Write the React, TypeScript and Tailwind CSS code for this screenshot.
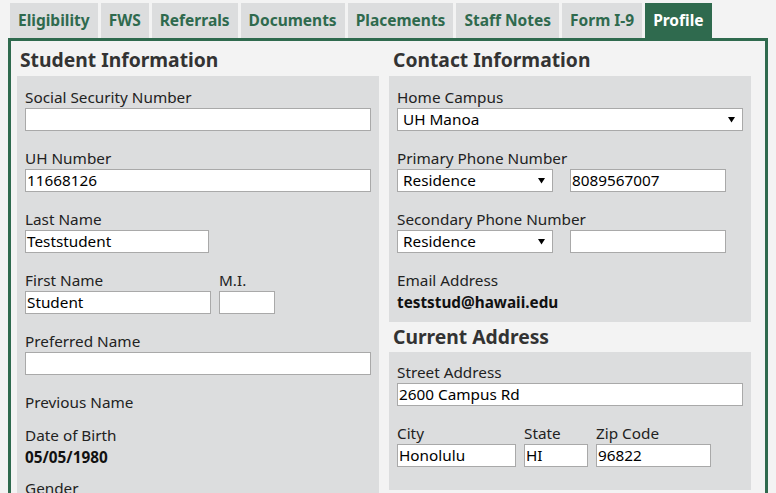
import React from "react";

const F = { fontFamily: '"Noto Sans", "Open Sans", sans-serif' };

function Arrow() {
  return (
    <svg width="7" height="7" viewBox="0 0 7 7" className="shrink-0">
      <path d="M0 1 H7 L3.5 6.5 Z" fill="#000" />
    </svg>
  );
}

function Input({ value = "", w }: { value?: string; w: string }) {
  return (
    <div
      className={`${w} h-[23px] bg-white border border-[#a9a9a9] pl-[1px] text-[15.3px] leading-[21px] text-black whitespace-nowrap overflow-hidden`}
    >
      {value}
    </div>
  );
}

function Select({ value, w }: { value: string; w: string }) {
  return (
    <div
      className={`${w} h-[23px] bg-white border border-[#a9a9a9] pl-[5px] pr-[7px] flex items-center justify-between text-[15.3px] leading-[21px] text-black`}
    >
      <span>{value}</span>
      <Arrow />
    </div>
  );
}

function Label({ children }: { children: React.ReactNode }) {
  return <div className="h-[22px] leading-[22px] text-[15.3px] text-[#222]">{children}</div>;
}

const tabs = ["Eligibility", "FWS", "Referrals", "Documents", "Placements", "Staff Notes", "Form I-9", "Profile"];

export default function App() {
  return (
    <div style={F} className="w-[776px] h-[493px] overflow-hidden bg-[#f3f3f3]">
      <div className="flex gap-[3px] pl-[10px] pt-[3px]">
        {tabs.map((t) => (
          <div
            key={t}
            className={`h-[35px] px-[8px] flex items-center font-bold text-[15.5px] ${
              t === "Profile" ? "bg-[#2f6a4e] text-white" : "bg-[#dcddde] text-[#2f6a4e]"
            }`}
          >
            {t}
          </div>
        ))}
      </div>
      <div className="ml-[8px] w-[760px] h-[460px] border-[3px] border-b-0 border-[#2f6a4e] pt-[4px] pl-[6px]">
        <div className="grid grid-cols-[362px_362px] gap-x-[10px]">
          {/* Left column */}
          <div>
            <div className="h-[30px] leading-[30px] pl-[3px] text-[19.3px] font-bold text-[#333]">Student Information</div>
            <div className="mt-[1px] bg-[#dcddde] h-[500px] pt-[10px] px-[8px]">
              <div className="mb-[16px]">
                <Label>Social Security Number</Label>
                <Input w="w-[346px]" />
              </div>
              <div className="mb-[16px]">
                <Label>UH Number</Label>
                <Input w="w-[346px]" value="11668126" />
              </div>
              <div className="mb-[16px]">
                <Label>Last Name</Label>
                <Input w="w-[184px]" value="Teststudent" />
              </div>
              <div className="mb-[16px] flex gap-[8px]">
                <div>
                  <Label>First Name</Label>
                  <Input w="w-[186px]" value="Student" />
                </div>
                <div>
                  <Label>M.I.</Label>
                  <Input w="w-[56px]" />
                </div>
              </div>
              <div className="mb-[16px]">
                <Label>Preferred Name</Label>
                <Input w="w-[346px]" />
              </div>
              <div className="mb-[11px]">
                <Label>Previous Name</Label>
              </div>
              <div className="mb-[9px]">
                <Label>Date of Birth</Label>
                <div className="h-[22px] leading-[22px] text-[15.3px] font-bold text-[#111]">05/05/1980</div>
              </div>
              <div>
                <Label>Gender</Label>
              </div>
            </div>
          </div>
          {/* Right column */}
          <div>
            <div className="h-[30px] leading-[30px] pl-[4px] text-[19.3px] font-bold text-[#333]">Contact Information</div>
            <div className="mt-[1px] bg-[#dcddde] pt-[10px] pb-[9px] px-[8px]">
              <div className="mb-[16px]">
                <Label>Home Campus</Label>
                <Select w="w-[346px]" value="UH Manoa" />
              </div>
              <div className="mb-[16px]">
                <Label>Primary Phone Number</Label>
                <div className="flex gap-[17px]">
                  <Select w="w-[156px]" value="Residence" />
                  <Input w="w-[156px]" value="8089567007" />
                </div>
              </div>
              <div className="mb-[16px]">
                <Label>Secondary Phone Number</Label>
                <div className="flex gap-[17px]">
                  <Select w="w-[156px]" value="Residence" />
                  <Input w="w-[156px]" />
                </div>
              </div>
              <div>
                <Label>Email Address</Label>
                <div className="h-[22px] leading-[22px] text-[15.3px] font-bold text-[#111]">teststud@hawaii.edu</div>
              </div>
            </div>
            <div className="h-[30px] leading-[30px] pl-[4px] text-[19.3px] font-bold text-[#333]">Current Address</div>
            <div className="bg-[#dcddde] pt-[9px] pb-[23px] px-[8px]">
              <div className="mb-[16px]">
                <Label>Street Address</Label>
                <Input w="w-[346px]" value="2600 Campus Rd" />
              </div>
              <div className="flex gap-[8px]">
                <div>
                  <Label>City</Label>
                  <Input w="w-[119px]" value="Honolulu" />
                </div>
                <div>
                  <Label>State</Label>
                  <Input w="w-[64px]" value="HI" />
                </div>
                <div>
                  <Label>Zip Code</Label>
                  <Input w="w-[115px]" value="96822" />
                </div>
              </div>
            </div>
          </div>
        </div>
      </div>
    </div>
  );
}
